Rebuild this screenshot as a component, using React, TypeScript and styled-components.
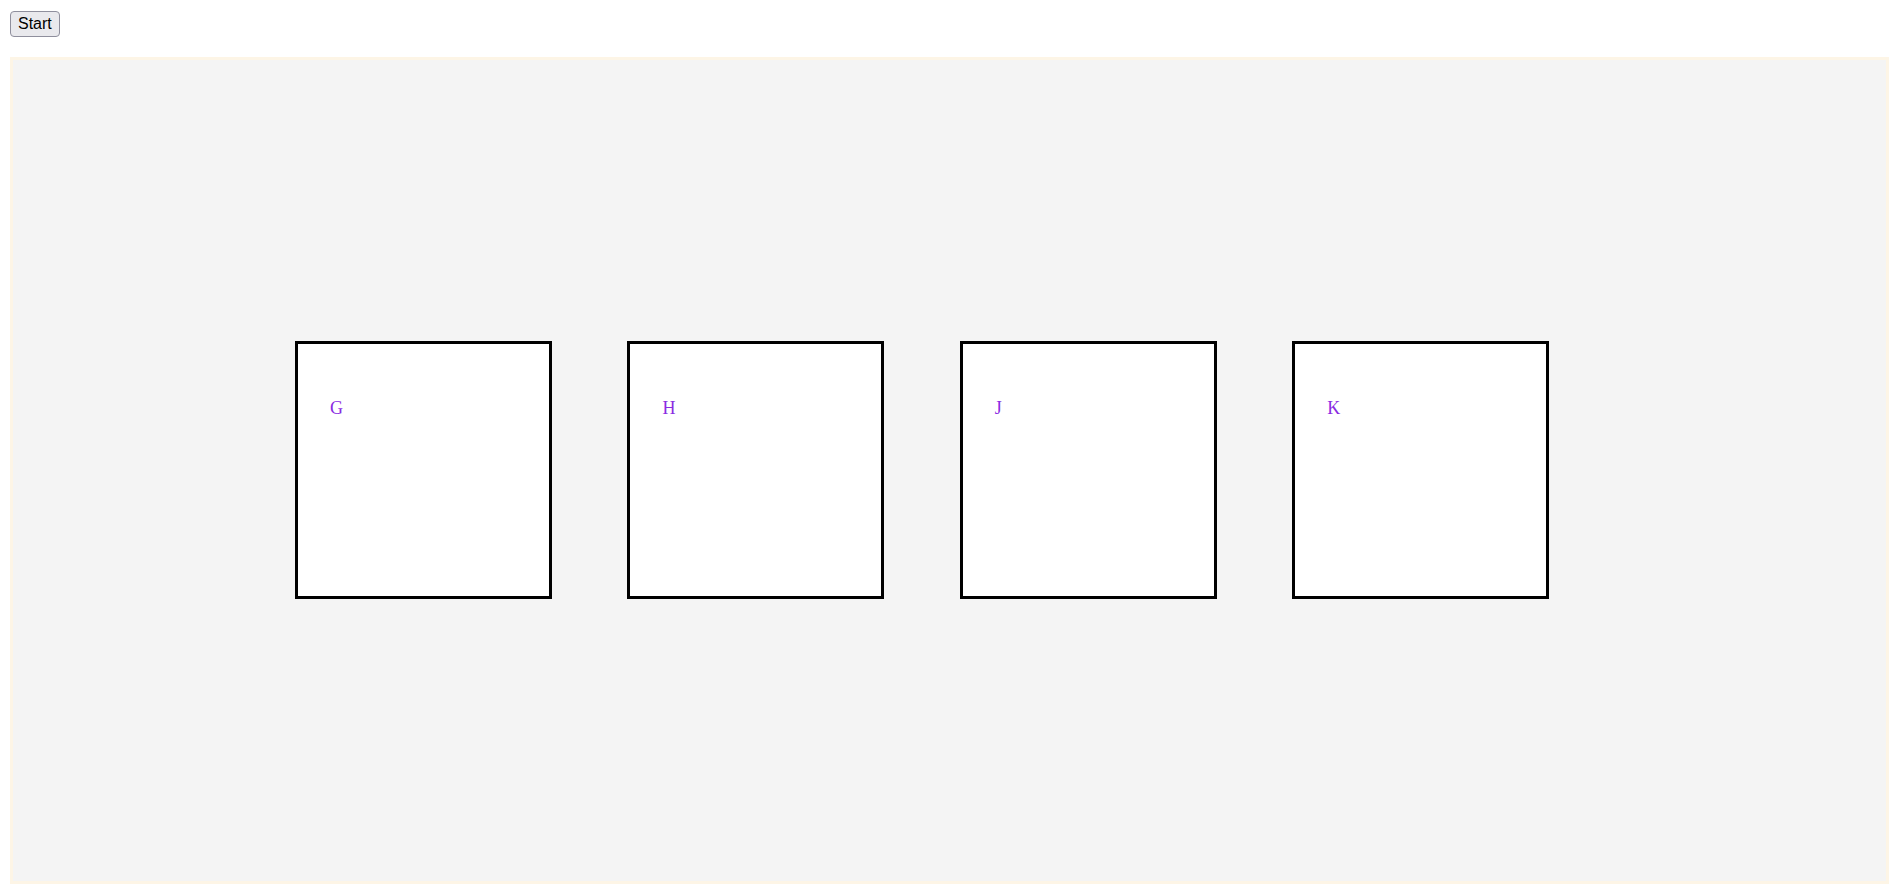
import React from "react";
import styled, { createGlobalStyle } from "styled-components";

const GlobalStyle = createGlobalStyle`
  html, body {
    margin: 0;
    padding: 0;
    background: #ffffff;
  }
  body {
    font-family: "Liberation Serif", serif;
  }
`;

const Page = styled.div`
  padding: 10px 0 5px 10px;
  display: flex;
  flex-direction: column;
  align-items: flex-start;
`;

const StartButton = styled.button`
  font-family: "Liberation Sans", Arial, sans-serif;
  font-size: 16px;
  line-height: 18px;
  color: #000;
  background: #e9e9ed;
  border: 1px solid #8f8f9d;
  border-radius: 4px;
  padding: 3px 7px;
  margin-top: 1px;
  height: 26px;
  cursor: pointer;
`;

const Stage = styled.div`
  box-sizing: border-box;
  margin-top: 20px;
  width: 1879px;
  height: 827px;
  background: #f4f4f4;
  border: 3px solid #fdf5e6;
  display: flex;
  align-items: flex-start;
  gap: 75.4px;
  padding: 281px 0 0 282px;
`;

const Card = styled.div`
  box-sizing: border-box;
  flex: 0 0 auto;
  width: 257px;
  height: 258px;
  background: #ffffff;
  border: 3px solid #000000;
  padding: 54px 0 0 32px;
`;

const Letter = styled.span`
  font-family: "Liberation Serif", "Times New Roman", serif;
  font-size: 18px;
  line-height: 20px;
  color: #8a2be2;
`;

const letters = ["G", "H", "J", "K"];

export default function App() {
  return (
    <>
      <GlobalStyle />
      <Page>
        <StartButton type="button">Start</StartButton>
        <Stage>
          {letters.map((l) => (
            <Card key={l}>
              <Letter>{l}</Letter>
            </Card>
          ))}
        </Stage>
      </Page>
    </>
  );
}
